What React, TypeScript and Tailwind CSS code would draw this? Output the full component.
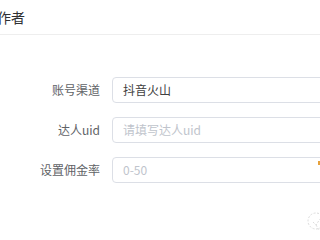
import React from 'react';

const fields = [
  { label: '账号渠道', value: '抖音火山', placeholder: '' },
  { label: '达人uid', value: '', placeholder: '请填写达人uid' },
  { label: '设置佣金率', value: '', placeholder: '0-50' },
];

export default function App() {
  return (
    <div
      className="relative w-[320px] h-[240px] overflow-hidden bg-white"
      style={{ fontFamily: '"Noto Sans CJK SC", "Noto Sans", sans-serif' }}
    >
      {/* Header */}
      <div className="h-[35px] border-b border-[#eeeeee] flex items-center">
        <span className="-ml-[3px] text-[14px] text-[#303133]">作者</span>
      </div>

      {/* Form */}
      <div className="mt-[42px] flex flex-col gap-[14px]">
        {fields.map((f, i) => (
          <div key={f.label} className="relative flex items-center">
            <label className="w-[100px] shrink-0 text-right text-[12px] text-[#606266]">
              {f.label}
            </label>
            <div className="ml-[12px] w-[240px] shrink-0 h-[26px] rounded-[4px] border border-[#dcdfe6] flex items-center px-[10px]">
              {f.value ? (
                <span className="text-[12px] text-[#404040]">{f.value}</span>
              ) : (
                <span className="text-[12px] text-[#c0c4cc]">{f.placeholder}</span>
              )}
            </div>
            {i === 2 && (
              <span className="absolute left-[318px] top-[4px] w-[2px] h-[4px] bg-[#e6a23c]" />
            )}
          </div>
        ))}
      </div>

      {/* watermark */}
      <svg
        className="absolute left-[304px] top-[210px]"
        width="22"
        height="24"
        viewBox="0 0 22 24"
        fill="none"
        stroke="#dcdcdc"
        strokeWidth="1"
        strokeDasharray="2 1.5"
      >
        <circle cx="12" cy="11" r="8" />
        <path d="M9 12l3 3l4-6" />
        <path d="M12 15l3 5" />
      </svg>
    </div>
  );
}
